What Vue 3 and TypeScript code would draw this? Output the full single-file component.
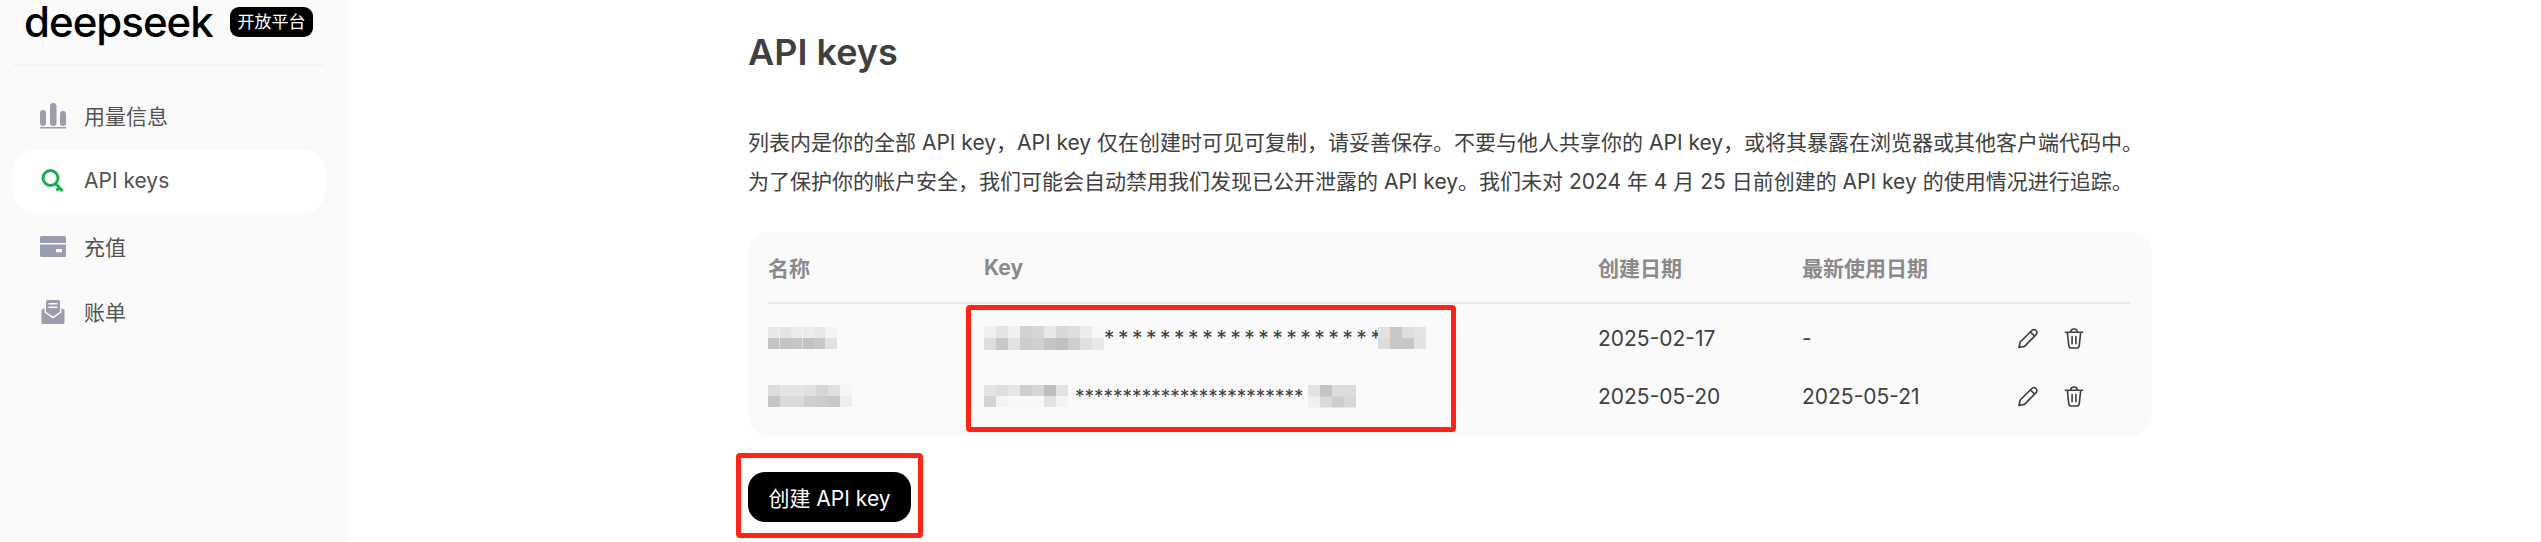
<script setup lang="ts">
import { ref } from 'vue';

type Cell = { x: number; y: number; w: number; h: number; c: string };
type KeyRow = {
  id: number;
  created: string;
  used: string;
  nameBlur: Cell[];
  keyLeft: Cell[];
  stars: string;
  keyRight: Cell[];
};

// builds the pixelated masks from two rows of grey levels
const mosaic = (rows: number[][], size: number, height: number): Cell[] =>
  rows.flatMap((row, r) =>
    row.map((g, i) => ({
      x: i * size,
      y: r * height,
      w: size,
      h: height,
      c: `rgb(${g},${g},${g})`,
    })),
  );

const navItems = [
  { id: 'usage', label: '用量信息' },
  { id: 'keys', label: 'API keys' },
  { id: 'topup', label: '充值' },
  { id: 'bills', label: '账单' },
];
const active = ref('keys');

const keyRows: KeyRow[] = [
  {
    id: 1,
    created: '2025-02-17',
    used: '-',
    nameBlur: mosaic([[232, 228, 236, 236, 232, 244], [196, 196, 198, 194, 200, 226]], 11.5, 11),
    keyLeft: mosaic(
      [[240, 228, 240, 210, 214, 232, 216, 222, 236, 248], [222, 200, 226, 204, 208, 196, 192, 206, 224, 232]],
      12,
      12,
    ),
    stars: '*********************',
    keyRight: mosaic([[226, 200, 222, 228], [220, 200, 198, 226]], 12, 11),
  },
  {
    id: 2,
    created: '2025-05-20',
    used: '2025-05-21',
    nameBlur: mosaic([[220, 228, 228, 224, 214, 224, 246], [198, 218, 218, 206, 204, 200, 238]], 12, 11),
    keyLeft: mosaic(
      [[228, 222, 230, 206, 214, 190, 226], [212, 244, 248, 248, 248, 226, 244]],
      12,
      11,
    ),
    stars: '************************',
    keyRight: mosaic([[226, 196, 220, 220], [240, 218, 206, 216]], 12, 11.500),
  },
];

const maskStyle = (cells: Cell[]) => ({
  width: `${Math.max(...cells.map((c) => c.x + c.w))}px`,
  height: `${Math.max(...cells.map((c) => c.y + c.h))}px`,
  background: cells
    .map((c) => `linear-gradient(${c.c},${c.c}) ${c.x}px ${c.y}px / ${c.w}px ${c.h}px no-repeat`)
    .join(','),
});
</script>

<template>
  <div class="page">
    <aside class="sidebar">
      <div class="brand">
        <span class="brand__logo">deepseek</span>
        <span class="brand__tag">开放平台</span>
      </div>
      <nav class="nav">
        <a
          v-for="item in navItems"
          :key="item.id"
          class="nav__item"
          :class="{ 'nav__item--active': active === item.id }"
          @click="active = item.id"
        >
          <svg class="nav__icon" viewBox="0 0 26 26" aria-hidden="true">
            <template v-if="item.id === 'usage'">
              <rect x="0" y="7" width="6" height="16" rx="3" />
              <rect x="10" y="0" width="6.5" height="23" rx="3.2" />
              <rect x="20" y="8" width="6" height="15" rx="3" />
              <rect x="0" y="24" width="26" height="1.5" />
            </template>
            <template v-else-if="item.id === 'keys'">
              <circle cx="10.500" cy="10" r="7.500" class="key-line" />
              <path d="M15.500 15.500 22.500 23M19.500 19.500l-3 3" class="key-line" />
            </template>
            <template v-else-if="item.id === 'topup'">
              <path
                fill-rule="evenodd"
                d="M1.500 2h23A1.500 1.500 0 0 1 26 3.500V9H0V3.500A1.500 1.500 0 0 1 1.500 2ZM0 10.500h26V21.500A1.500 1.500 0 0 1 24.500 23H1.500A1.500 1.500 0 0 1 0 21.500ZM16 15v3.300h6V15Z"
              />
            </template>
            <template v-else>
              <path
                fill-rule="evenodd"
                d="M6 2.500A1.500 1.500 0 0 1 7.500 1h11A1.500 1.500 0 0 1 20 2.500V13l-7 4.500L6 13ZM8.500 4v1.500h9V4ZM8.500 7.500V9h9V7.500Z"
              />
              <path d="M1.500 11 4.500 9V13.500L13 19.500 21.500 13.500V9L24.500 11V23.500A1.500 1.500 0 0 1 23 25H3A1.500 1.500 0 0 1 1.500 23.500Z" />
            </template>
          </svg>
          <span class="nav__label">{{ item.label }}</span>
        </a>
      </nav>
    </aside>

    <main class="content">
      <h1 class="title">API keys</h1>
      <p class="intro">
        列表内是你的全部 API key，API key 仅在创建时可见可复制，请妥善保存。不要与他人共享你的 API key，或将其暴露在浏览器或其他客户端代码中。<br />
        为了保护你的帐户安全，我们可能会自动禁用我们发现已公开泄露的 API key。我们未对 2024 年 4 月 25 日前创建的 API key 的使用情况进行追踪。
      </p>

      <section class="table">
        <div class="table__row table__row--head">
          <span>名称</span>
          <span>Key</span>
          <span>创建日期</span>
          <span>最新使用日期</span>
          <span></span>
        </div>
        <div v-for="row in keyRows" :key="row.id" class="table__row">
          <span class="mask" :style="maskStyle(row.nameBlur)"></span>
          <span class="secret">
            <span class="mask" :style="maskStyle(row.keyLeft)"></span>
            <span class="secret__stars" :class="row.id === 1 ? 'secret__stars--wide' : 'secret__stars--tight'">{{ row.stars }}</span>
            <span class="mask" :style="maskStyle(row.keyRight)"></span>
          </span>
          <span>{{ row.created }}</span>
          <span>{{ row.used }}</span>
          <span class="actions">
            <svg viewBox="0 0 20 20" class="action" aria-hidden="true">
              <path d="M1 19 2.200 13.500 13.800 2A2.600 2.600 0 0 1 18 6.200L6.500 17.800ZM12.500 3.500 16.500 7.500" />
            </svg>
            <svg viewBox="0 0 20 22" class="action" aria-hidden="true">
              <path d="M1 4.500h18M6.500 4.500C6.500 2.500 8 1 10 1s3.500 1.500 3.500 3.500M3 4.500 4.500 18.500Q4.800 21 7 21H13Q15.200 21 15.500 18.500L17 4.500M8 9v7.500M12 9v7.500" />
            </svg>
          </span>
        </div>
      </section>

      <button class="create" type="button">创建 API key</button>

      <!-- red markers drawn on top of the screenshot -->
      <div class="marker marker--keys"></div>
      <div class="marker marker--button"></div>
    </main>
  </div>
</template>

<style scoped>
.page {
  display: flex;
  width: 2541px;
  height: 542px;
  overflow: hidden;
  background: #fff;
  color: #404040;
  font-family: Inter, "Noto Sans CJK SC", sans-serif;
}

.sidebar {
  box-sizing: border-box;
  flex: none;
  width: 349px;
  height: 100%;
  padding: 0 24px 0 13px;
  background: #fafafa;
}

.brand {
  display: flex;
  align-items: center;
  box-sizing: border-box;
  height: 66px;
  padding: 2px 0 22px 11px;
  border-bottom: 2px solid #f4f4f4;
}

.brand__logo {
  flex: none;
  width: 206px;
  color: #000;
  font-size: 42px;
  font-weight: 500;
  line-height: 40px;
  letter-spacing: -1px;
}

.brand__tag {
  flex: none;
  box-sizing: border-box;
  width: 83px;
  border-radius: 9px;
  background: #000;
  color: #fff;
  font-size: 17px;
  line-height: 30px;
  text-align: center;
  white-space: nowrap;
}

.nav {
  display: flex;
  flex-direction: column;
  gap: 2.500px;
  margin-top: 18px;
}

.nav__item {
  display: flex;
  align-items: center;
  gap: 18px;
  height: 63px;
  padding-left: 27px;
  border-radius: 21px;
  color: #525252;
  font-size: 21px;
  cursor: pointer;
}

.nav__item--active {
  background: #fff;
}

.nav__label {
  margin-top: -2px;
}

.nav__icon {
  flex: none;
  width: 26px;
  height: 26px;
  fill: #9a9dad;
}

.key-line {
  fill: none;
  stroke: #1aad50;
  stroke-width: 3;
}

.content {
  position: relative;
  flex: 1;
  box-sizing: border-box;
  padding-left: 399px;
}

.title {
  margin: 0;
  padding-top: 29px;
  color: #404040;
  font-size: 36px;
  font-weight: 600;
  line-height: 46px;
}

.intro {
  margin: 48px 0 0;
  color: #404040;
  font-size: 21px;
  line-height: 39px;
  white-space: nowrap;
}

.table {
  box-sizing: border-box;
  width: 1404px;
  height: 204px;
  margin-top: 31px;
  padding: 0 22px 0 20px;
  border-radius: 21px;
  background: #fafafa;
  font-size: 21px;
}

.table__row {
  display: grid;
  grid-template-columns: 216px 614px 204px 216px 1fr;
  align-items: center;
  height: 58px;
}

.table__row--head {
  box-sizing: border-box;
  height: 72px;
  margin-bottom: 5px;
  border-bottom: 2px solid #e8e8e8;
  color: #8a8a8a;
  font-weight: 700;
}

.mask {
  display: block;
  flex: none;
}

.secret {
  display: flex;
  align-items: center;
}

.secret__stars {
  flex: none;
  white-space: nowrap;
}

.secret__stars--wide {
  width: 274px;
  font-size: 21px;
  letter-spacing: 3.500px;
}

.secret__stars--tight {
  width: 233px;
  margin-left: 7px;
  font-size: 19px;
}

.actions {
  display: flex;
  align-items: center;
  gap: 26px;
}

.action {
  width: 20px;
  height: 21px;
  fill: none;
  stroke: #404040;
  stroke-width: 1.700;
  stroke-linecap: round;
  stroke-linejoin: round;
}

.create {
  display: block;
  width: 163px;
  height: 50px;
  margin-top: 36px;
  padding: 0;
  border: 0;
  border-radius: 17px;
  background: #000;
  color: #fff;
  font: inherit;
  font-size: 21px;
}

.marker {
  position: absolute;
  box-sizing: border-box;
  border: 5px solid #ff2418;
  border-radius: 4px;
}

.marker--keys {
  left: 617px;
  top: 305px;
  width: 490px;
  height: 127px;
}

.marker--button {
  left: 387px;
  top: 453px;
  width: 187px;
  height: 85px;
}
</style>

<style>
html,
body {
  margin: 0;
  background: #fff;
}
</style>
